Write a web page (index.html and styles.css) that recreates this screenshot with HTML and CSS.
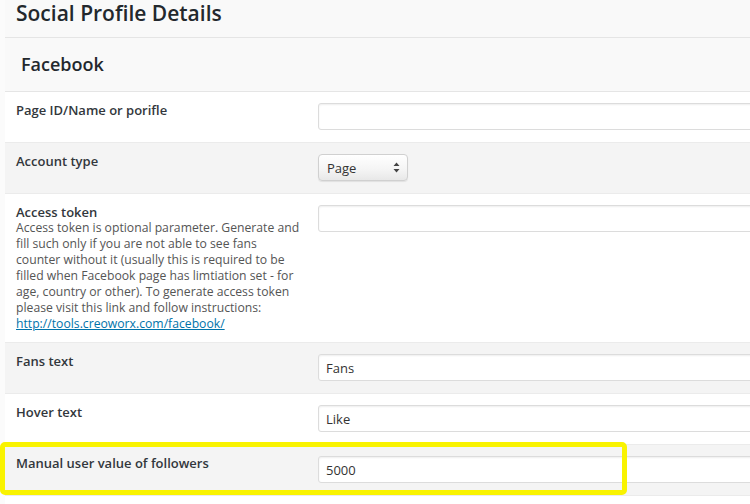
FILE: index.html
```html
<!DOCTYPE html>
<html lang="en">
<head>
<meta charset="utf-8">
<title>Social Profile Details</title>
<link rel="stylesheet" href="styles.css">
</head>
<body>
<div class="page">
  <h1 class="title">Social Profile Details</h1>
  <h2 class="section">Facebook</h2>
  <div class="rows">
    <div class="row">
      <div class="label"><strong>Page ID/Name or porifle</strong></div>
      <div class="field"><input class="text" type="text" value=""></div>
    </div>
    <div class="row alt">
      <div class="label"><strong>Account type</strong></div>
      <div class="field">
        <div class="select"><span>Page</span>
          <svg class="arrows" width="7" height="11" viewBox="0 0 7 11"><path d="M3.5 0.5 L6.5 4 L0.5 4 Z M3.5 10.5 L6.5 7 L0.5 7 Z" fill="#444"/></svg>
        </div>
      </div>
    </div>
    <div class="row tall">
      <div class="label"><strong>Access token</strong>
        <p class="desc">Access token is optional parameter. Generate and fill such only if you are not able to see fans counter without it (usually this is required to be filled when Facebook page has limtiation set - for age, country or other). To generate access token please visit this link and follow instructions: <a href="#">http://tools.creoworx.com/facebook/</a></p>
      </div>
      <div class="field"><input class="text" type="text" value=""></div>
    </div>
    <div class="row alt">
      <div class="label"><strong>Fans text</strong></div>
      <div class="field"><input class="text" type="text" value="Fans"></div>
    </div>
    <div class="row">
      <div class="label"><strong>Hover text</strong></div>
      <div class="field"><input class="text" type="text" value="Like"></div>
    </div>
    <div class="row alt highlighted">
      <div class="label"><strong>Manual user value of followers</strong></div>
      <div class="field"><input class="text" type="text" value="5000"></div>
      <div class="marker"></div>
    </div>
    <div class="row empty"></div>
  </div>
</div>
</body>
</html>
```
FILE: styles.css
```css
html, body {
  margin: 0;
  padding: 0;
  background: #fbfbfb;
  overflow: hidden;
}
body {
  font-family: "Open Sans", "DejaVu Sans", sans-serif;
  color: #333;
  width: 750px;
  height: 504px;
}
.page {
  margin-left: 5px;
  width: 1000px;
}
.title {
  margin: 0;
  padding: 0 0 0 11px;
  font-size: 21px;
  font-weight: 600;
  line-height: 26px;
  color: #23282d;
  background: #f9f9f9;
  border-bottom: 1px solid #e5e5e5;
  box-sizing: border-box;
  height: 38px;
}
.section {
  margin: 0;
  height: 54px;
  box-sizing: border-box;
  padding: 14px 0 0 16px;
  font-size: 18px;
  font-weight: 600;
  line-height: 24px;
  color: #23282d;
  background: #f9f9f9;
  border-bottom: 1px solid #e5e5e5;
}
.rows {
  display: flex;
  flex-direction: column;
}
.row {
  display: grid;
  grid-template-columns: 313px 1fr;
  padding: 11px 0 12px 0;
  background: #fff;
  border-bottom: 1px solid #ebebeb;
  position: relative;
}
.row.alt {
  background: #f4f4f4;
}
.row.empty {
  height: 40px;
  padding: 0;
  border-bottom: none;
}
.label {
  margin-top: -1px;
  padding: 0 15px 0 11px;
  font-size: 13px;
  line-height: 16px;
  color: #32373c;
}
.label strong {
  font-weight: 600;
  display: block;
}
.desc {
  margin: 0;
  font-size: 12.2px;
  line-height: 16px;
  color: #555;
}
.desc a {
  color: #0073aa;
  text-decoration: underline;
}
.row.tall {
  padding-bottom: 10px;
}
.field {
  display: flex;
}
.text {
  width: 620px;
  height: 27px;
  box-sizing: border-box;
  margin: 0;
  padding: 0 7px;
  border: 1px solid #dcdcdc;
  border-radius: 3px;
  background: #fff;
  box-shadow: inset 0 1px 2px rgba(0, 0, 0, 0.07);
  font-family: "Open Sans", "DejaVu Sans", sans-serif;
  font-size: 13px;
  color: #333;
  outline: none;
}
.select {
  width: 90px;
  height: 27px;
  box-sizing: border-box;
  border: 1px solid #d0d0d0;
  border-radius: 4px;
  background: linear-gradient(to bottom, #ffffff 0%, #f4f4f4 60%, #e8e8e8 100%);
  box-shadow: 0 1px 1px rgba(0, 0, 0, 0.08);
  display: flex;
  align-items: center;
  justify-content: space-between;
  padding: 0 7px 0 8px;
  font-size: 13px;
  color: #333;
}
.arrows {
  display: block;
}
.marker {
  position: absolute;
  left: -5px;
  top: -3px;
  width: 627px;
  height: 53px;
  box-sizing: border-box;
  border: 5px solid #f9f300;
  border-radius: 5px;
  pointer-events: none;
}
```
